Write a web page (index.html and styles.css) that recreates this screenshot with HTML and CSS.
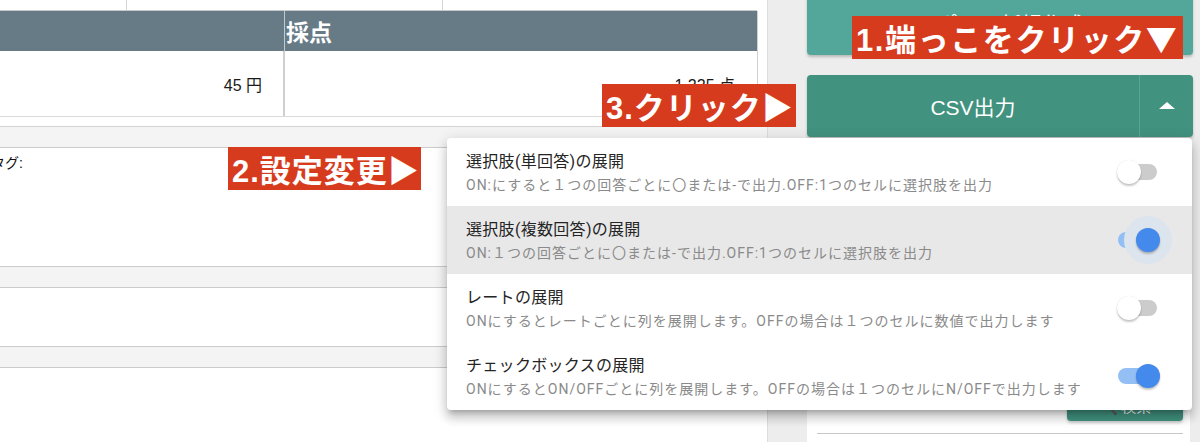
FILE: index.html
```html
<!DOCTYPE html>
<html lang="ja">
<head>
<meta charset="utf-8">
<title>CSV出力</title>
<link rel="stylesheet" href="styles.css">
</head>
<body>
<div class="page">
  <div class="main">
    <div class="toprow">
      <div class="tcell w1"></div>
      <div class="tcell w2"></div>
      <div class="tcell w3"></div>
    </div>
    <div class="score">
      <div class="shead">
        <div class="hcell c1"></div>
        <div class="hcell c2">採点</div>
      </div>
      <div class="srow">
        <div class="dcell c1">45 円</div>
        <div class="dcell c2">1,225 点</div>
      </div>
    </div>
    <div class="spacer"></div>
    <div class="band first"></div>
    <div class="sbody b1"><div class="tag">タグ:</div></div>
    <div class="band"></div>
    <div class="sbody b2"></div>
    <div class="band"></div>
  </div>
  <div class="side">
    <div class="btn btn-new">レポート新規作成</div>
    <div class="btn btn-csv">
      <div class="csv-main">CSV出力</div>
      <div class="csv-arrow"><span class="caret"></span></div>
    </div>
    <div class="card">
      <div class="cbtn cb1"></div>
      <div class="cbtn cb2"></div>
      <div class="cbtn cb3"></div>
      <div class="card-foot">
        <div class="search-btn">🔍 検索</div>
      </div>
      <div class="card-line"></div>
    </div>
  </div>

  <div class="menu">
    <div class="item">
      <div class="itext">
        <div class="ititle">選択肢(単回答)の展開</div>
        <div class="idesc">ON:にすると１つの回答ごとに〇または-で出力.OFF:1つのセルに選択肢を出力</div>
      </div>
      <div class="switch"><span class="track"></span><span class="thumb"></span></div>
    </div>
    <div class="item hover">
      <div class="itext">
        <div class="ititle">選択肢(複数回答)の展開</div>
        <div class="idesc">ON:１つの回答ごとに〇または-で出力.OFF:1つのセルに選択肢を出力</div>
      </div>
      <div class="switch on focus"><span class="track"></span><span class="halo"></span><span class="thumb"></span></div>
    </div>
    <div class="item">
      <div class="itext">
        <div class="ititle">レートの展開</div>
        <div class="idesc">ONにするとレートごとに列を展開します。OFFの場合は１つのセルに数値で出力します</div>
      </div>
      <div class="switch"><span class="track"></span><span class="thumb"></span></div>
    </div>
    <div class="item">
      <div class="itext">
        <div class="ititle">チェックボックスの展開</div>
        <div class="idesc">ONにするとON/OFFごとに列を展開します。OFFの場合は１つのセルにN/OFFで出力します</div>
      </div>
      <div class="switch on"><span class="track"></span><span class="thumb"></span></div>
    </div>
  </div>

  <div class="note n1">1.端っこをクリック<span class="tri">▼</span></div>
  <div class="note n3">3.クリック<span class="tri">▶</span></div>
  <div class="note n2">2.設定変更<span class="tri">▶</span></div>
</div>
</body>
</html>
```

FILE: styles.css
```css
* { box-sizing: border-box; }
html, body { margin: 0; padding: 0; }
body {
  width: 1200px;
  height: 442px;
  overflow: hidden;
  font-family: Roboto, "Noto Sans CJK JP", sans-serif;
  color: #222;
  background: #ededed;
}
.page {
  position: relative;
  display: flex;
  width: 1200px;
  height: 442px;
}
.main {
  width: 768px;
  height: 442px;
  background: #fff;
  border-right: 1px solid #dcdcdc;
  overflow: hidden;
}
.toprow {
  display: flex;
  height: 11px;
  border-bottom: 1px solid #c9c9c9;
  width: 757px;
}
.tcell { border-right: 1px solid #d6d6d6; }
.w1 { width: 127px; }
.w2 { width: 316px; }
.w3 { flex: 1; border-right: none; }
.score {
  width: 758px;
  border-right: 1px solid #d0d0d0;
}
.shead {
  display: flex;
  height: 40px;
  background: #677b87;
  color: #fff;
}
.hcell.c1 { width: 285px; border-right: 1px solid #c4c9cc; }
.hcell.c2 {
  flex: 1;
  font-family: "Noto Sans CJK JP", sans-serif;
  font-weight: 700;
  font-size: 23px;
  line-height: 40px;
  padding-left: 1px;
}
.srow {
  display: flex;
  height: 66px;
  border-bottom: 1px solid #dadada;
}
.dcell {
  display: flex;
  align-items: center;
  justify-content: flex-end;
  font-family: "Liberation Sans", "Noto Sans CJK JP", sans-serif;
  font-size: 16px;
  color: #1a1a1a;
}
.dcell.c1 { width: 285px; border-right: 2px solid #cfcfcf; padding-right: 21px; }
.dcell.c2 { flex: 1; padding-right: 22px; }
.spacer { height: 9px; }
.band {
  height: 21px;
  background: #f4f4f4;
  border-bottom: 1px solid #cbcbcb;
}
.band.first { height: 22px; border-top: 1px solid #d3d3d3; }
.sbody { border-bottom: 1px solid #cbcbcb; }
.sbody.b1 { height: 119px; }
.sbody.b2 { height: 59px; }
.tag {
  font-family: "Liberation Sans", "Noto Sans CJK JP", sans-serif;
  font-size: 14px;
  line-height: 18px;
  padding-top: 6px;
  text-indent: -9px;
  color: #111;
}

.side {
  flex: 1;
  display: flex;
  flex-direction: column;
  padding: 0 7px 0 39px;
}
.btn {
  color: #fff;
  font-family: "Liberation Sans", "Noto Sans CJK JP", sans-serif;
  font-size: 21px;
  border-radius: 4px;
  box-shadow: 0 2px 3px rgba(0,0,0,0.22);
}
.btn-new {
  height: 62px;
  margin-top: -7px;
  background: #52a79a;
  display: flex;
  align-items: center;
  justify-content: center;
  padding-bottom: 2px;
}
.btn-csv {
  margin-top: 20px;
  height: 62px;
  background: #41927f;
  display: flex;
}
.csv-main {
  flex: 1;
  display: flex;
  align-items: center;
  justify-content: center;
  border-right: 1px solid #5aa596;
}
.csv-arrow {
  width: 53px;
  display: flex;
  align-items: center;
  justify-content: center;
}
.caret {
  width: 0;
  height: 0;
  border-left: 8px solid transparent;
  border-right: 8px solid transparent;
  border-bottom: 7px solid #fff;
  margin-top: -1px;
}
.card {
  margin-top: 12px;
  flex: 1;
  background: #fff;
  margin-right: 3px;
  padding: 28px 0 0 10px;
  display: flex;
  flex-direction: column;
}
.cbtn {
  height: 42px;
  background: #41927f;
  border-radius: 3px;
  margin-right: -2px;
  margin-bottom: 34px;
}
.cbtn.cb3 { margin-bottom: 20px; height: 40px; }
.card-foot {
  display: flex;
  justify-content: flex-end;
  padding-right: 7px;
}
.search-btn {
  width: 116px;
  height: 32px;
  background: #41927f;
  border-radius: 4px;
  color: #fff;
  font-size: 15px;
  display: flex;
  align-items: center;
  justify-content: center;
  box-shadow: 0 2px 3px rgba(0,0,0,0.2);
}
.card-line {
  margin: 12px 7px 0 0;
  border-top: 1px solid #c8c8c8;
}

.menu {
  position: absolute;
  left: 447px;
  top: 138px;
  width: 745px;
  background: #fff;
  border-radius: 4px;
  box-shadow: 0 5px 5px -3px rgba(0,0,0,0.2), 0 8px 10px 1px rgba(0,0,0,0.14), 0 3px 14px 2px rgba(0,0,0,0.12);
  overflow: hidden;
}
.item {
  height: 68px;
  display: flex;
  align-items: center;
  padding: 0 32px 0 19px;
}
.item.hover { background: #e8e8e8; }
.itext { flex: 1; }
.ititle {
  font-size: 16px;
  line-height: 22px;
  color: #242424;
  letter-spacing: 0.3px;
}
.idesc {
  margin-top: 3px;
  font-size: 14px;
  line-height: 18px;
  color: #8a8a8a;
  letter-spacing: 1px;
}
.switch {
  position: relative;
  width: 44px;
  height: 24px;
}
.track {
  position: absolute;
  left: 2px;
  top: 4px;
  width: 39px;
  height: 16px;
  border-radius: 8px;
  background: #cccccc;
}
.thumb {
  position: absolute;
  left: 1px;
  top: 0;
  width: 24px;
  height: 24px;
  border-radius: 50%;
  background: #fff;
  box-shadow: 0 2px 2px rgba(0,0,0,0.22), 0 0 1px rgba(0,0,0,0.15);
}
.switch.on .track { background: #94bff5; }
.switch.on .thumb { left: 20px; background: #448aed; }
.halo {
  position: absolute;
  left: 8px;
  top: -12px;
  width: 48px;
  height: 48px;
  border-radius: 50%;
  background: #dce4ee;
}

.note {
  position: absolute;
  height: 43px;
  background: #d73b1e;
  color: #fff;
  font-family: "Liberation Sans", "Noto Sans CJK JP", sans-serif;
  font-weight: 700;
  font-size: 31px;
  line-height: 43px;
  padding: 0 3px 0 4px;
  letter-spacing: 1px;
  white-space: nowrap;
}
.tri { font-family: "Noto Sans CJK JP", sans-serif; letter-spacing: 0; }
.n1 { left: 852px; top: 16px; width: 331px; letter-spacing: 1.6px; }
.n3 { left: 602px; top: 84px; width: 194px; }
.n2 { left: 228px; top: 147px; width: 193px; }
```
